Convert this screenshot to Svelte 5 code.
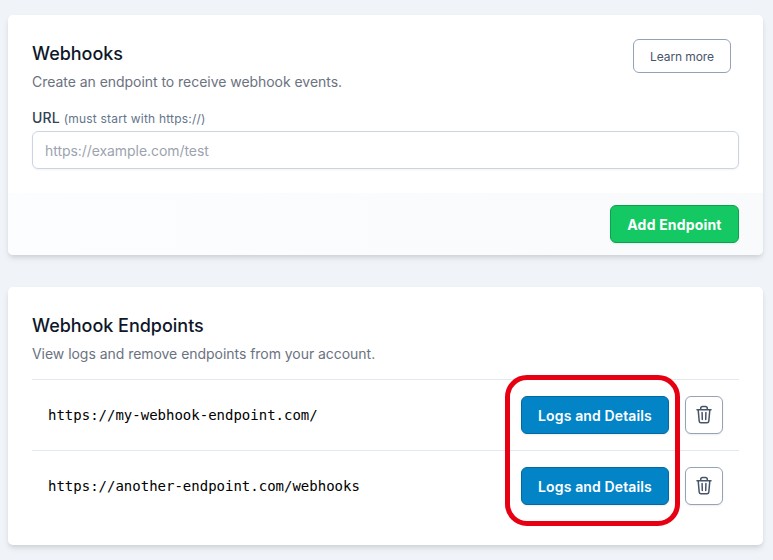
<script>
  const endpoints = ['https://my-webhook-endpoint.com/', 'https://another-endpoint.com/webhooks'];
  let url = $state('');
</script>

<main>
  <section class="card create">
    <div class="body">
      <header>
        <div>
          <h2>Webhooks</h2>
          <p>Create an endpoint to receive webhook events.</p>
        </div>
        <button class="btn outline learn">Learn more</button>
      </header>
      <label for="url">URL <small>(must start with https://)</small></label>
      <input id="url" type="text" placeholder="https://example.com/test" bind:value={url} />
    </div>
    <footer>
      <button class="btn green">Add Endpoint</button>
    </footer>
  </section>

  <section class="card list">
    <h2>Webhook Endpoints</h2>
    <p>View logs and remove endpoints from your account.</p>
    <ul>
      {#each endpoints as endpoint}
        <li>
          <code>{endpoint}</code>
          <button class="btn blue">Logs and Details</button>
          <button class="btn outline trash" aria-label="Remove endpoint">
            <svg width="18" height="20" viewBox="0 0 18 20" fill="none" stroke="#475569" stroke-width="1.5" stroke-linecap="round" stroke-linejoin="round">
              <path d="M2 4.7H16M5.7 4.4V3.5Q5.7 1.5 7.7 1.5H10.3Q12.3 1.5 12.3 3.5V4.4M3.2 5L4.2 16.2Q4.4 17.8 6 17.8H12Q13.6 17.8 13.8 16.2L14.8 5M7.1 7.6L7.3 14.6M10.9 7.6L10.7 14.6" />
            </svg>
          </button>
        </li>
      {/each}
    </ul>
    <div class="highlight"></div>
  </section>
</main>

<style>
  :global(body) {
    background: #f0f4f9;
  }
  main {
    box-sizing: border-box;
    height: 560px;
    padding: 15px 10px 0 8px;
    overflow: hidden;
    display: flex;
    flex-direction: column;
    gap: 32px;
    font-family: Inter, sans-serif;
  }
  .card {
    box-sizing: border-box;
    background: #fff;
    border-radius: 5px;
    box-shadow: 0 4px 6px -1px rgba(0, 0, 0, 0.1), 0 2px 4px -1px rgba(0, 0, 0, 0.08);
  }
  .create {
    height: 240px;
    display: flex;
    flex-direction: column;
    overflow: hidden;
  }
  .body {
    height: 178px;
    box-sizing: border-box;
    padding: 24px 24px 0;
  }
  header {
    display: flex;
    justify-content: space-between;
    align-items: flex-start;
    padding-right: 8px;
    height: 69px;
  }
  h2 {
    margin: 0;
    padding-top: 3px;
    font-size: 18px;
    line-height: 24px;
    font-weight: 500;
    letter-spacing: -0.02px;
    color: #0f172a;
  }
  p {
    margin: 6px 0 0;
    font-size: 14px;
    line-height: 20px;
    letter-spacing: -0.04px;
    color: #6b7280;
  }
  label {
    display: block;
    height: 23px;
    font-size: 14px;
    line-height: 20px;
    font-weight: 500;
    letter-spacing: 0.15px;
    color: #334155;
  }
  small {
    font-size: 12px;
    font-weight: 400;
    letter-spacing: 0.2px;
    color: #64748b;
  }
  input {
    box-sizing: border-box;
    display: block;
    width: 100%;
    height: 38px;
    padding: 0 12px;
    border: 1px solid #cbd5e1;
    border-radius: 6px;
    background: #fff;
    box-shadow: 0 1px 2px rgba(0, 0, 0, 0.05);
    font: 14px Inter, sans-serif;
    letter-spacing: -0.06px;
    color: #334155;
  }
  input::placeholder {
    color: #9ca3af;
    opacity: 1;
  }
  footer {
    height: 62px;
    box-sizing: border-box;
    padding: 12px 24px;
    display: flex;
    justify-content: flex-end;
    background: linear-gradient(90deg, #fcfdfe, #f8fafc);
  }
  .btn {
    box-sizing: border-box;
    display: flex;
    align-items: center;
    justify-content: center;
    flex: none;
    height: 38px;
    padding: 0;
    border: 1px solid;
    border-radius: 6px;
    box-shadow: 0 1px 2px rgba(0, 0, 0, 0.08);
    font-family: Inter, sans-serif;
    font-size: 14px;
    color: #fff;
  }
  .outline {
    background: #fff;
    border-color: #94a3b8;
  }
  .learn {
    width: 98px;
    height: 34px;
    font-size: 12px;
    letter-spacing: -0.08px;
    color: #475569;
    box-shadow: none;
  }
  .green {
    width: 129px;
    font-weight: 700;
    letter-spacing: 0.18px;
    background: #14c864;
    border-color: #08a34c;
  }
  .blue {
    width: 148px;
    font-weight: 600;
    letter-spacing: 0.13px;
    background: #0284c7;
    border-color: #0369a1;
  }
  .trash {
    width: 38px;
    margin-left: 16px;
  }
  .list {
    position: relative;
    height: 258px;
    padding: 24px;
  }
  ul {
    list-style: none;
    margin: 15px 0 0;
    padding: 0;
  }
  li {
    box-sizing: border-box;
    height: 71px;
    display: flex;
    align-items: center;
    padding: 0 16px;
    border-top: 1px solid #e2e8f0;
  }
  code {
    flex: 1;
    font: 14px/20px 'DejaVu Sans Mono', monospace;
    color: #000;
  }
  .highlight {
    position: absolute;
    left: 497px;
    top: 88px;
    width: 175px;
    height: 151px;
    box-sizing: border-box;
    border: 5px solid #e60012;
    border-radius: 22px;
    pointer-events: none;
  }
</style>
